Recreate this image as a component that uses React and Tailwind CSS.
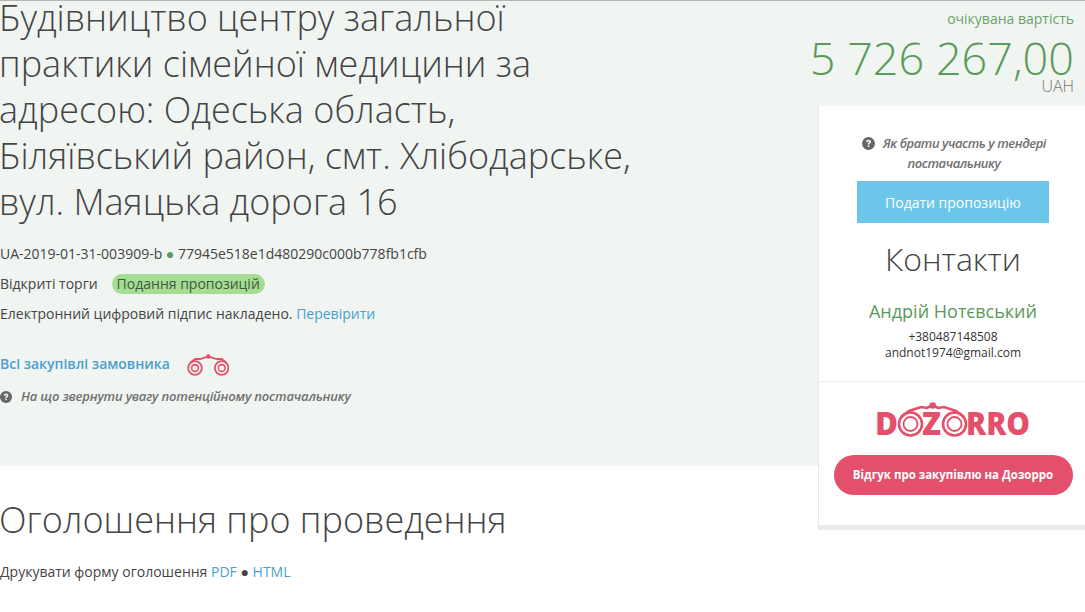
// App.jsx
const Question = ({ className }) => (
  <svg viewBox="0 0 24 24" className={className}>
    <circle cx="12" cy="12" r="12" fill="currentColor" />
    <path d="M7.500 9.300c0-2.700 2-4.300 4.600-4.300 2.700 0 4.600 1.600 4.600 3.800 0 1.900-1.100 2.800-2.300 3.500-.8.500-1 .8-1 1.700h-2.900c-.1-1.800.4-2.700 1.600-3.400.9-.6 1.400-.9 1.400-1.600 0-.7-.6-1.100-1.400-1.100-.9 0-1.500.5-1.600 1.600z" fill="#f1f5f2" />
    <rect x="10.500" y="15.300" width="3" height="3" fill="#f1f5f2" />
  </svg>
);

const Binoculars = () => (
  <svg viewBox="0 0 42 22" className="w-[42px] h-[22px]" fill="none" stroke="#e4506b">
    <circle cx="8" cy="14" r="6.800" strokeWidth="1.800" />
    <circle cx="8" cy="14" r="3.400" strokeWidth="1.600" />
    <circle cx="34.700" cy="14" r="6.800" strokeWidth="1.800" />
    <circle cx="34.700" cy="14" r="3.400" strokeWidth="1.600" />
    <path d="M3 9 8 5h5l8.300-2.500L29.700 5h5l5 4" strokeWidth="1.800" />
    <circle cx="21.300" cy="2.500" r="2.200" fill="#e4506b" stroke="none" />
  </svg>
);

const DozorroLogo = () => (
  <svg viewBox="0 0 154 36" className="w-[154px] h-[36px]">
    <g fill="#e4506b" fontFamily="'Open Sans', sans-serif" fontWeight="800" fontSize="32">
      <text x="-2" y="33" textLength="23" lengthAdjust="spacingAndGlyphs">D</text>
      <text x="45" y="33" textLength="19" lengthAdjust="spacingAndGlyphs">Z</text>
      <text x="89" y="33" textLength="64" lengthAdjust="spacingAndGlyphs">RRO</text>
    </g>
    <g fill="none" stroke="#e4506b">
      <circle cx="33.500" cy="22" r="11.500" strokeWidth="2.600" />
      <circle cx="33.500" cy="22" r="7" strokeWidth="1.800" />
      <circle cx="77.500" cy="22" r="11.500" strokeWidth="2.600" />
      <circle cx="77.500" cy="22" r="7" strokeWidth="1.800" />
      <path d="M24 15l8-6 12-4 6 1 5.700-3 5.300 3 6-1 12 4 8 6" strokeWidth="2.600" />
    </g>
    <circle cx="55.700" cy="3.500" r="3.300" fill="#e4506b" />
  </svg>
);

export default function App() {
  return (
    <div className="min-h-[612px] bg-white font-['Open_Sans',sans-serif] text-[14px] text-[#444] overflow-hidden">
      <div className="h-[466px] bg-[#f1f5f2] border-t border-[#b5b5b5] flex justify-between items-start">
        <div className="w-[650px] -mt-[6px]">
          <h1 className="-ml-[1px] text-[36px] leading-[46px] font-light text-[#444]">
            Будівництво центру загальної практики сімейної медицини за адресою: Одеська область, Біляївський район, смт. Хлібодарське, вул. Маяцька дорога 16
          </h1>
          <div className="mt-[19px] leading-[20px]">
            UA-2019-01-31-003909-b <span className="text-[#5a9a5a]">●</span> 77945e518e1d480290c000b778fb1cfb
          </div>
          <div className="mt-[10px] flex items-center leading-[20px]">
            <span>Відкриті торги</span>
            <span className="ml-[14px] px-[5px] rounded-full bg-[#a5dd94] text-[#3d5a3d]">Подання пропозицій</span>
          </div>
          <div className="mt-[10px] leading-[20px]">
            Електронний цифровий підпис накладено. <span className="text-[#4a9fd0]">Перевірити</span>
          </div>
          <div className="mt-[27px] flex items-center h-[24px]">
            <span className="font-semibold text-[#4a9fd0]">Всі закупівлі замовника</span>
            <span className="ml-[17px] mt-[3px]"><Binoculars /></span>
          </div>
          <div className="mt-[12px] flex items-center gap-[9px] text-[#707070]">
            <Question className="w-[12px] h-[12px] text-[#666]" />
            <span className="italic font-semibold text-[13px] tracking-[-0.18px]">На що звернути увагу потенційному постачальнику</span>
          </div>
        </div>

        <div className="w-[267px] shrink-0">
          <div className="flex flex-col items-end pr-[11px]">
            <div className="mt-[8px] text-[14px] leading-[20px] text-[#6aa36a]">очікувана вартість</div>
            <div className="mt-[3px] text-[45px] leading-[52px] font-light text-[#5a9a5a] whitespace-nowrap">5 726 267,00</div>
            <div className="-mt-[7px] text-[16px] leading-[18px] font-light text-[#777]">UAH</div>
          </div>
          <div className="mt-[11px] h-[424px] bg-white border-l border-[#e8e8e8] border-b-[5px] border-b-[#ebebeb] flex flex-col">
            <div className="pt-[27px] pl-[40px] pr-[38px] flex flex-col items-center">
              <div className="ml-[2px] text-center italic font-semibold text-[13px] leading-[20px] text-[#707070] tracking-[-0.45px]">
                <Question className="inline-block w-[13px] h-[13px] mr-[8px] mb-[3px] text-[#666]" />
                Як брати участь у тендері постачальнику
              </div>
              <div className="mt-[8px] w-[192px] h-[42px] bg-[#6cc6ea] text-white flex items-center justify-center">Подати пропозицію</div>
              <div className="mt-[13px] text-[32px] leading-[46px] font-light text-[#444]">Контакти</div>
              <div className="mt-[17px] text-[18px] leading-[24px] text-[#5a9a5a] whitespace-nowrap">Андрій Нотєвський</div>
              <div className="mt-[6px] text-[12px] leading-[16px] text-[#333]">+380487148508</div>
              <div className="text-[12px] leading-[16px] text-[#333]">andnot1974@gmail.com</div>
            </div>
            <div className="mt-[20px] pl-[2px] border-t border-[#eeeeee] flex flex-col items-center">
              <div className="mt-[20px] ml-[2px]"><DozorroLogo /></div>
              <div className="mt-[17px] w-[239px] h-[40px] rounded-full bg-[#e4506b] text-white text-[11.5px] font-bold flex items-center justify-center">Відгук про закупівлю на Дозорро</div>
            </div>
          </div>
        </div>
      </div>

      <h2 className="-ml-[1px] mt-[31px] text-[36px] leading-[46px] font-light text-[#444]">Оголошення про проведення</h2>
      <div className="mt-[19px] leading-[20px]">
        Друкувати форму оголошення <span className="text-[#4a9fd0]">PDF</span> ● <span className="text-[#4a9fd0]">HTML</span>
      </div>
    </div>
  );
}
